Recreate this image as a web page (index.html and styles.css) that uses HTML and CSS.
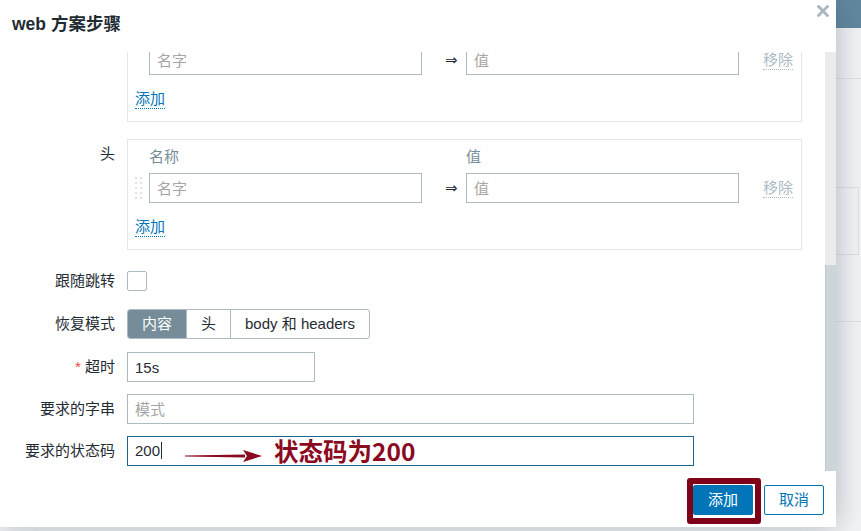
FILE: index.html
```html
<!DOCTYPE html>
<html lang="zh">
<head>
<meta charset="utf-8">
<title>web 方案步骤</title>
<link rel="stylesheet" href="styles.css">
</head>
<body>
<div class="page">
  <div class="page-top"></div>
  <div class="page-nav"></div>
  <div class="page-panel"></div>
  <div class="page-rule"></div>
</div>

<div class="dialog" role="dialog">
  <div class="dialog-head">
    <h4 class="dialog-title">web 方案步骤</h4>
    <button class="btn-close" aria-label="关闭">
      <svg width="12" height="12" viewBox="0 0 12 12"><path d="M1.6 1.6L10.4 10.4M10.4 1.6L1.6 10.4" stroke="#a9b6bf" stroke-width="2.8" stroke-linecap="square"/></svg>
    </button>
  </div>

  <div class="dialog-main">
    <div class="dialog-body">
      <div class="form">

        <div class="row row-card">
          <span class="lbl"></span>
          <div class="card card-cont">
            <div class="kv kv-row">
              <span class="drag"></span>
              <input class="textbox w-kv" placeholder="名字">
              <span class="kv-arrow">⇒</span>
              <input class="textbox w-kv" placeholder="值">
              <span class="kv-remove"><span class="link-off">移除</span></span>
            </div>
            <div class="card-foot"><span class="link">添加</span></div>
          </div>
        </div>

        <div class="row row-card row-card-last">
          <label class="lbl">头</label>
          <div class="card">
            <div class="kv kv-head"><span></span><span>名称</span><span></span><span>值</span><span></span></div>
            <div class="kv kv-row">
              <span class="drag"><svg width="7" height="22" viewBox="0 0 7 22"><g fill="#dfe3e6"><rect x="0" y="0" width="2" height="2"/><rect x="5" y="0" width="2" height="2"/><rect x="0" y="5" width="2" height="2"/><rect x="5" y="5" width="2" height="2"/><rect x="0" y="10" width="2" height="2"/><rect x="5" y="10" width="2" height="2"/><rect x="0" y="15" width="2" height="2"/><rect x="5" y="15" width="2" height="2"/><rect x="0" y="20" width="2" height="2"/><rect x="5" y="20" width="2" height="2"/></g></svg></span>
              <input class="textbox w-kv" placeholder="名字">
              <span class="kv-arrow">⇒</span>
              <input class="textbox w-kv" placeholder="值">
              <span class="kv-remove"><span class="link-off">移除</span></span>
            </div>
            <div class="card-foot"><span class="link">添加</span></div>
          </div>
        </div>

        <div class="row row-check">
          <label class="lbl">跟随跳转</label>
          <div class="ctl"><span class="chk"></span></div>
        </div>

        <div class="row row-seg">
          <label class="lbl">恢复模式</label>
          <div class="ctl">
            <div class="seg"><span class="seg-item on">内容</span><span class="seg-item">头</span><span class="seg-item">body 和 headers</span></div>
          </div>
        </div>

        <div class="row">
          <label class="lbl"><span class="req">*</span> 超时</label>
          <div class="ctl"><input class="textbox w-short" value="15s"></div>
        </div>

        <div class="row">
          <label class="lbl">要求的字串</label>
          <div class="ctl"><input class="textbox w-wide" placeholder="模式"></div>
        </div>

        <div class="row row-last">
          <label class="lbl">要求的状态码</label>
          <div class="ctl">
            <div class="textbox w-wide is-focus">200<span class="caret"></span></div>
            <div class="annot">
              <svg width="78" height="14" viewBox="0 0 78 14"><polygon points="0,6.6 60,5.6 60,8.4 0,7.4" fill="#8a0b1f"/><polygon points="58,1 77,7 58,13 62,7" fill="#8a0b1f"/></svg>
              <span class="annot-text">状态码为200</span>
            </div>
          </div>
        </div>

      </div>
    </div>
    <div class="scrollbar"><div class="scroll-thumb"></div></div>
  </div>

  <div class="dialog-foot">
    <div class="btn-wrap">
      <button class="btn btn-primary">添加</button>
      <span class="mark-box"></span>
    </div>
    <button class="btn btn-alt">取消</button>
  </div>
</div>
</body>
</html>
```

FILE: styles.css
```css
* { box-sizing: border-box; }
html, body { margin: 0; padding: 0; }
body {
  width: 861px;
  height: 531px;
  overflow: hidden;
  position: relative;
  background: #f3f4f5;
  font-family: "Liberation Sans", "Noto Sans CJK SC", sans-serif;
  font-size: 15px;
  color: #1f2c33;
}

/* page behind the modal */
.page-top { height: 28px; background: #62889f; }
.page-nav { height: 51px; border-bottom: 1px solid #dfe3e6; }
.page-panel { margin: 108px 2px 0 0; height: 68px; border: 1px solid #dde2e5; }
.page-rule { margin-top: 66px; border-top: 1px solid #dfe3e6; }

/* dialog */
.dialog {
  position: absolute;
  left: 0;
  top: 0;
  width: 836px;
  height: 527px;
  background: #fff;
  box-shadow: 0 0 30px rgba(40, 65, 85, 0.35);
  display: flex;
  flex-direction: column;
}
.dialog-head {
  position: relative;
  flex: none;
  height: 52px;
  padding: 14px 12px 0;
}
.dialog-title {
  margin: 0;
  font-size: 17.5px;
  font-weight: bold;
  line-height: 21px;
  color: #1f2c33;
}
.btn-close {
  position: absolute;
  top: 5px;
  right: 7px;
  width: 12px;
  height: 12px;
  padding: 0;
  border: 0;
  background: none;
  display: block;
}
.btn-close svg { display: block; }

.dialog-main { flex: none; height: 419px; display: flex; }
.dialog-body {
  flex: 1;
  overflow: hidden;
  display: flex;
  flex-direction: column-reverse;
}
.form { flex: none; padding: 0 0 5px; }

.scrollbar {
  flex: none;
  width: 11px;
  background: #ebebeb;
  display: flex;
  flex-direction: column;
  justify-content: flex-end;
}
.scroll-thumb {
  height: 206px;
  background: #cbd5db;
  border-left: 1px solid #c0cad0;
}

/* form rows */
.row {
  display: grid;
  grid-template-columns: 115px auto;
  column-gap: 12px;
  align-items: center;
  margin-bottom: 12px;
}
.row-card { align-items: start; margin-bottom: 17px; }
.row-card > .lbl { padding-top: 6px; }
.row-card-last { margin-bottom: 21px; }
.row-check { margin-bottom: 18px; }
.row-seg { margin-bottom: 13px; }
.row-last { margin-bottom: 0; }

.lbl {
  text-align: right;
  line-height: 18px;
  white-space: nowrap;
  color: #1f2c33;
}
.req { color: #e54343; }
.ctl { position: relative; justify-self: start; }

.textbox {
  display: block;
  height: 30px;
  border: 1px solid #acbbc2;
  padding: 0 7px;
  font: inherit;
  line-height: 28px;
  color: #1f2c33;
  background: #fff;
  outline: none;
  border-radius: 0;
  margin: 0;
}
.textbox::placeholder { color: #a5a5a5; opacity: 1; }
.w-short { width: 188px; }
.w-wide { width: 567px; }
.w-kv { width: 273px; }
.is-focus { border-color: #1a6496; white-space: nowrap; }
.caret {
  display: inline-block;
  width: 1px;
  height: 17px;
  margin-left: 1px;
  vertical-align: -3px;
  background: #1f2c33;
}

/* key/value cards */
.card {
  width: 675px;
  border: 1px solid #e3e7ea;
  padding: 7px 7px 12px;
}
.card-cont { border-top: 0; padding-top: 0; }
.kv {
  display: grid;
  grid-template-columns: 14px 273px 44px 273px auto;
  align-items: center;
}
.kv-head { line-height: 20px; margin-bottom: 6px; color: #768d99; }
.kv-row { height: 30px; }
.drag { display: flex; align-items: center; }
.drag svg { display: block; }
.kv-arrow {
  padding-left: 23px;
  font-family: "DejaVu Sans", sans-serif;
  font-size: 15px;
  color: #1f2c33;
}
.kv-remove { padding-left: 24px; display: flex; }
.link-off {
  display: inline-block;
  line-height: 19px;
  color: #acbbc2;
  border-bottom: 1px dotted #acbbc2;
}
.card-foot { display: flex; padding-top: 14px; }
.link {
  display: inline-block;
  line-height: 19px;
  color: #0275b8;
  border-bottom: 1px dotted #0275b8;
}

/* checkbox & segmented */
.chk {
  display: block;
  width: 20px;
  height: 20px;
  border: 1px solid #acbbc2;
  border-radius: 2px;
  background: #fff;
}
.seg {
  display: inline-flex;
  height: 30px;
  border: 1px solid #acbbc2;
  border-radius: 3px;
  overflow: hidden;
}
.seg-item {
  padding: 0 14px;
  line-height: 28px;
  border-left: 1px solid #acbbc2;
  white-space: nowrap;
}
.seg-item:first-child { border-left: 0; }
.seg-item.on { background: #768d99; color: #fff; }

/* annotation */
.annot {
  position: absolute;
  left: 58px;
  top: 0;
  height: 30px;
  display: flex;
  align-items: center;
  gap: 11px;
  white-space: nowrap;
}
.annot svg { display: block; margin-top: 9px; }
.annot-text {
  font-family: "Noto Sans CJK SC", sans-serif;
  font-weight: 700;
  font-size: 24.5px;
  line-height: 1;
  color: #8a0b1f;
}

/* footer */
.dialog-foot {
  flex: none;
  height: 56px;
  padding: 14px 12px 12px;
  display: flex;
  justify-content: flex-end;
  gap: 11px;
}
.btn-wrap { position: relative; display: flex; }
.btn {
  height: 30px;
  padding: 0 14px;
  font: inherit;
  line-height: 28px;
  border: 1px solid #0275b8;
  border-radius: 2px;
  white-space: nowrap;
}
.btn-primary { background: #0275b8; color: #fff; }
.btn-alt { background: #fff; color: #0275b8; }
.mark-box {
  position: absolute;
  left: -6px;
  top: -7px;
  right: -8px;
  bottom: -9px;
  border: 6px solid #7f0019;
  border-radius: 3px;
}
```
